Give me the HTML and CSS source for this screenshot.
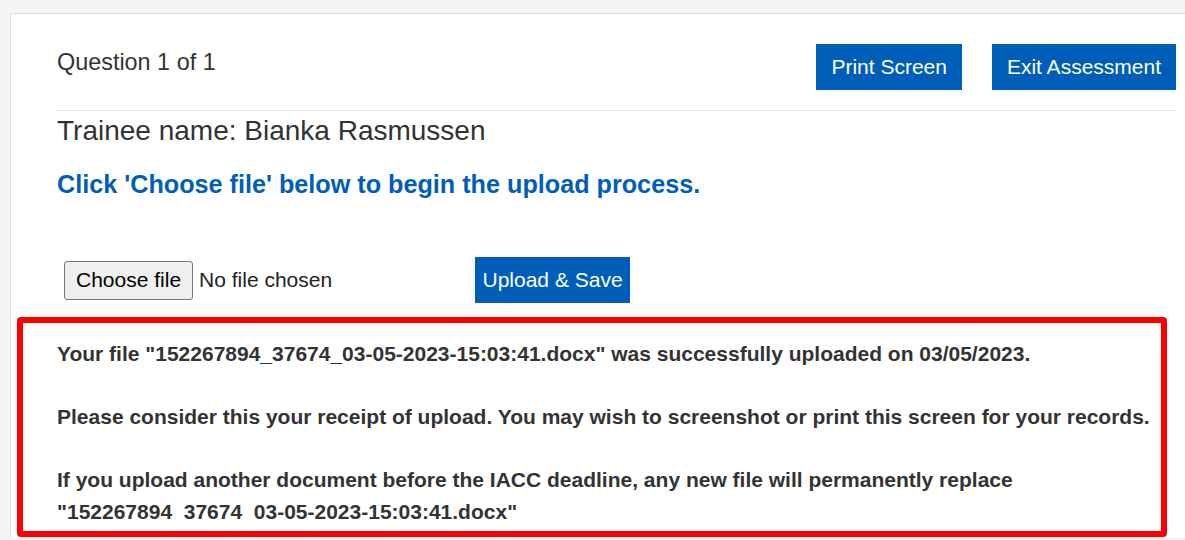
FILE: index.html
```html
<!DOCTYPE html>
<html lang="en">
<head>
<meta charset="utf-8">
<title>Assessment upload</title>
<link rel="stylesheet" href="styles.css">
</head>
<body>
<main class="card">
  <header class="head">
    <div class="question">Question 1 of 1</div>
    <div class="actions">
      <button class="btn" type="button">Print Screen</button>
      <button class="btn" type="button">Exit Assessment</button>
    </div>
  </header>
  <hr class="rule">
  <h2 class="trainee">Trainee name: Bianka Rasmussen</h2>
  <p class="instruction">Click 'Choose file' below to begin the upload process.</p>
  <div class="upload-row">
    <div class="file">
      <span class="file-btn">Choose file</span>
      <span class="file-name">No file chosen</span>
    </div>
    <button class="btn upload" type="button">Upload &amp; Save</button>
  </div>
  <section class="receipt">
    <p>Your file "152267894_37674_03-05-2023-15:03:41.docx" was successfully uploaded on 03/05/2023.</p>
    <p>Please consider this your receipt of upload. You may wish to screenshot or print this screen for your records.</p>
    <p>If you upload another document before the IACC deadline, any new file will permanently replace <span class="fname">"152267894&nbsp; 37674&nbsp; 03-05-2023-15:03:41.docx"</span></p>
  </section>
</main>
</body>
</html>
```
FILE: styles.css
```css
html, body {
  margin: 0;
  padding: 0;
}
body {
  background: #f5f5f5;
  font-family: "Liberation Sans", Arial, sans-serif;
  color: #333;
  height: 540px;
  overflow: hidden;
}
.card {
  margin: 13px 0 0 10px;
  background: #fff;
  border: 1px solid #ddd;
  border-right: none;
  border-bottom: none;
  padding: 30px 9px 0 45px;
}
.head {
  display: flex;
  justify-content: space-between;
  align-items: flex-start;
}
.question {
  font-size: 23.4px;
  margin-top: 4.5px;
  padding-left: 1px;
}
.actions {
  display: flex;
  gap: 30px;
}
.btn {
  font-family: "Liberation Sans", Arial, sans-serif;
  font-size: 21px;
  color: #fff;
  background: #005eb8;
  border: none;
  border-radius: 0;
  height: 46px;
  padding: 0 15px;
  cursor: pointer;
}
.rule {
  border: none;
  border-top: 1px solid #e5e5e5;
  margin: 20px 0 0 0;
}
.trainee {
  font-size: 28px;
  font-weight: normal;
  margin: 4px 0 0 1px;
  line-height: 1.15;
}
.instruction {
  font-size: 25.2px;
  font-weight: bold;
  color: #005eb8;
  margin: 23px 0 0 1px;
  line-height: 1.15;
}
.upload-row {
  display: flex;
  align-items: center;
  margin-top: 58px;
}
.file {
  display: flex;
  align-items: center;
  margin-left: 8px;
  width: 411px;
  font-size: 21px;
}
.file-btn {
  box-sizing: border-box;
  height: 39px;
  display: flex;
  align-items: center;
  padding: 0 11px;
  background: #efefef;
  border: 1px solid #767676;
  border-radius: 3px;
  color: #000;
  margin-right: 6px;
}
.file-name {
  color: #222;
}
.upload {
  padding: 0 7.5px;
}
.receipt {
  margin: 14px 9px 0 -39px;
  border: 6px solid #f00;
  border-radius: 4px;
  padding: 15px 8px 4px 34px;
  font-size: 21px;
  font-weight: bold;
  line-height: 31.5px;
  color: #333;
}
.receipt p {
  margin: 0 0 31.5px 0;
}
.receipt p:last-child {
  margin-bottom: 0;
}
.fname {
  white-space: nowrap;
}
```
